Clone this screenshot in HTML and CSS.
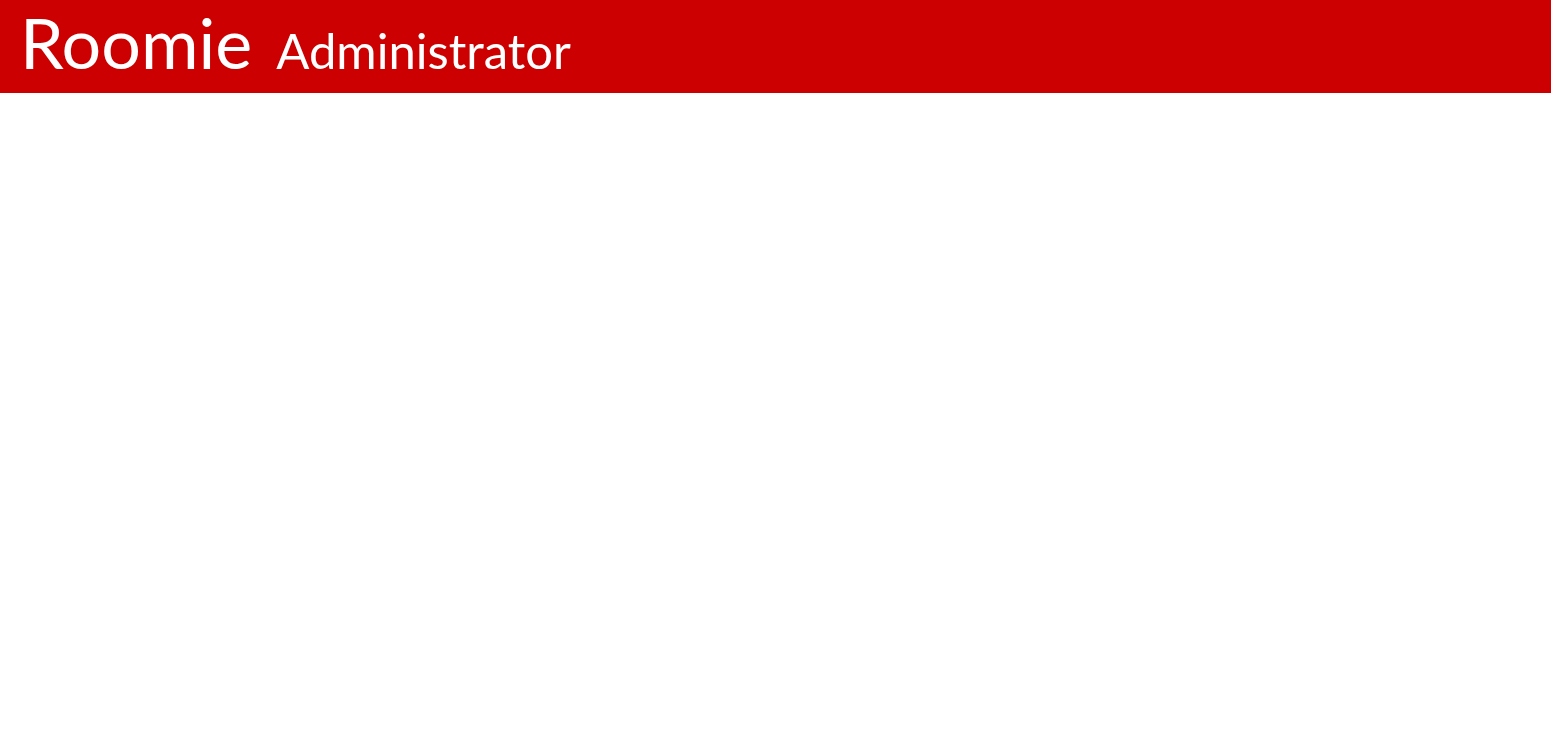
FILE: index.html
```html
<!DOCTYPE html>
<html>
<head>
<meta charset="utf-8">
<link rel="stylesheet" href="styles.css">
</head>
<body>
<header class="topbar">
  <span class="brand">Roomie</span>
  <span class="role">Administrator</span>
</header>
</body>
</html>
```
FILE: styles.css
```css
html, body {
  margin: 0;
  padding: 0;
  background: #fff;
}
.topbar {
  background: #cc0000;
  height: 93px;
  box-sizing: border-box;
  padding: 7px 0 0 20px;
  display: flex;
  align-items: baseline;
  gap: 24px;
  color: #fff;
  font-family: "Lato", sans-serif;
  line-height: 1;
}
.brand {
  font-size: 70px;
}
.role {
  font-size: 49px;
}
```
